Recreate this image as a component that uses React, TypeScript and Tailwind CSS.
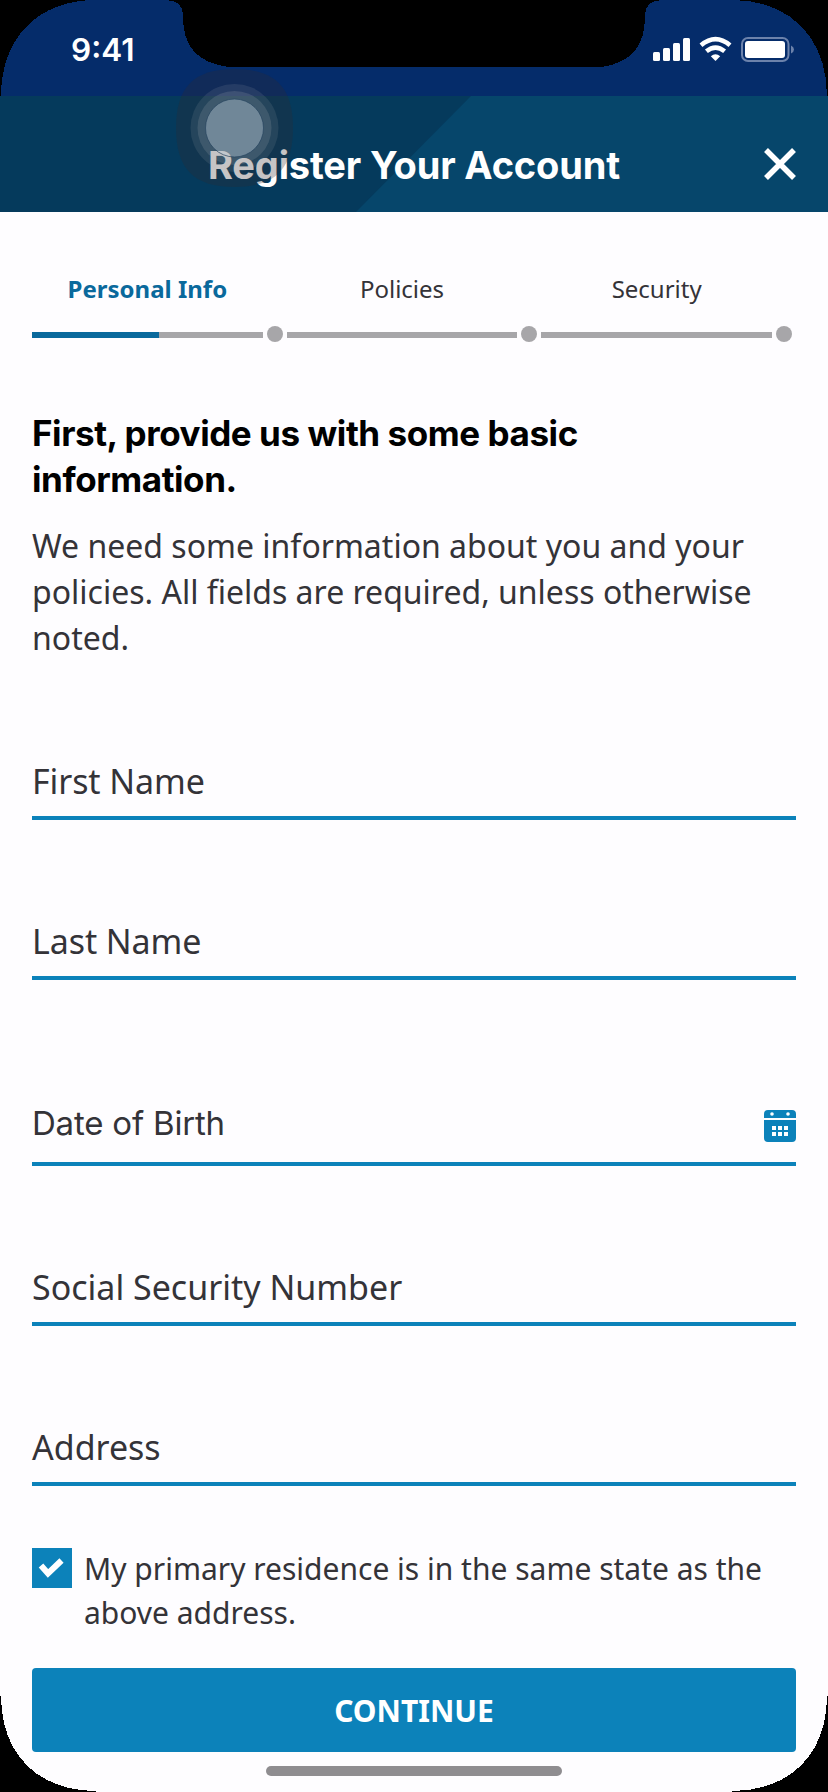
import React from "react";

const steps = [
  { label: "Personal Info", active: true },
  { label: "Policies", active: false },
  { label: "Security", active: false },
];

function StatusBar() {
  return (
    <div className="h-24 bg-[#052c6a] flex justify-between">
      <div className="pl-[71px] pt-[31px] font-['Inter',sans-serif] font-semibold text-[31.5px] leading-[38px] text-white">9:41</div>
      <svg className="w-[150px] h-[40px] mt-[30px] mr-[32px]" viewBox="646 30 150 40">
        <g fill="#fff">
          <rect x="653" y="52" width="7" height="9" rx="1.5" />
          <rect x="663" y="48" width="7" height="13" rx="1.5" />
          <rect x="673" y="43" width="7" height="18" rx="1.5" />
          <rect x="683" y="38" width="7" height="23" rx="1.5" />
          <path d="M715.500 61 L710.800 56.200 Q715.500 52.400 720.200 56.200 Z" />
        </g>
        <path d="M701 45.300 Q715.500 33 730 45.300" fill="none" stroke="#fff" strokeWidth="4.500" />
        <path d="M706.400 51.300 Q715.500 43.800 724.600 51.300" fill="none" stroke="#fff" strokeWidth="4.500" />
        <rect x="742" y="38" width="46.500" height="23" rx="6" fill="none" stroke="#6c82ab" strokeWidth="2" />
        <rect x="745" y="41" width="40" height="17" rx="3" fill="#fff" />
        <path d="M791 45.500 Q794 47 794 49.500 Q794 52 791 53.500Z" fill="#6c82ab" />
      </svg>
    </div>
  );
}

function Header() {
  return (
    <div className="h-[116px] relative">
      <svg className="absolute inset-0 w-full h-full" viewBox="0 0 828 116">
        <rect width="828" height="116" fill="#06466b" />
        <path d="M0 0H471L356 116H0Z" fill="#053a5c" />
      </svg>
      <div className="relative flex items-start justify-center pt-[46px]">
        <h1 className="font-['Inter',sans-serif] font-bold text-[38px] leading-[46px] tracking-[-0.15px] text-white whitespace-nowrap">Register Your Account</h1>
      </div>
      <svg className="absolute left-[764px] top-[52px] w-8 h-8" viewBox="0 0 32 32" aria-label="Close">
        <path d="M2 2L30 30M30 2L2 30" stroke="#fff" strokeWidth="5.500" fill="none" />
      </svg>
    </div>
  );
}

function Stepper() {
  return (
    <div className="flex pt-[57px]">
      {steps.map((s) => (
        <div key={s.label} className="flex-1">
          <div
            className={
              s.active
                ? "pr-6 text-center font-bold text-[24px] leading-10 text-[#0a699c] whitespace-nowrap"
                : "pr-6 text-center text-[24px] leading-10 text-[#343338] whitespace-nowrap"
            }
          >
            {s.label}
          </div>
          <div className="flex items-center mt-[17px] h-4">
            <div className="flex-1 h-[6px] mt-[2px] bg-[#a7a6a9]">
              {s.active && <div className="w-[127px] h-full bg-[#0a699c]" />}
            </div>
            <div className="w-4 h-4 mx-1 rounded-full bg-[#a7a6a9]" />
          </div>
        </div>
      ))}
    </div>
  );
}

function CalendarIcon() {
  return (
    <svg className="w-8 h-8" viewBox="0 0 32 32">
      <path d="M4 0H28Q32 0 32 4V8H0V4Q0 0 4 0Z M0 10H32V28Q32 32 28 32H4Q0 32 0 28Z" fill="#0c82ba" />
      <g fill="#fff">
        <circle cx="8" cy="4" r="1.800" />
        <circle cx="24" cy="4" r="1.800" />
        <rect x="8" y="16" width="4" height="4" />
        <rect x="14" y="16" width="4" height="4" />
        <rect x="20" y="16" width="4" height="4" />
        <rect x="8" y="22" width="4" height="4" />
        <rect x="14" y="22" width="4" height="4" />
        <rect x="20" y="22" width="4" height="4" />
      </g>
    </svg>
  );
}

function Frame() {
  return (
    <svg className="absolute inset-0 w-[828px] h-[1792px] pointer-events-none" viewBox="0 0 828 1792">
      <g shapeRendering="crispEdges">
        <path d="M0 0H96C38 0 1 38 1 96H0Z" />
        <path d="M828 0H732C790 0 827 38 827 96H828Z" />
        <path d="M0 1792V1696H1C1 1754 38 1791 96 1791V1792Z" />
        <path d="M828 1792V1696H827C827 1754 790 1791 732 1791V1792Z" />
        <path d="M166 0C178 1 183 5 183 16C183 46 196 62 228 67H602C632 62 645 46 645 16C645 5 650 1 662 0Z" />
      </g>
      <path d="M234.500 69C276 69 293 88 293 128S276 187 234.500 187S176 168 176 128S193 69 234.500 69Z" fill="#322a2e" fillOpacity=".28" />
      <circle cx="234.500" cy="128" r="44" fill="#c6c8cc" fillOpacity=".11" />
      <circle cx="234.500" cy="128" r="37" fill="#c6c8cc" fillOpacity=".15" />
      <circle cx="234.500" cy="128" r="29" fill="#bccbd8" fillOpacity=".41" stroke="#26455f" strokeOpacity=".7" strokeWidth="1" />
    </svg>
  );
}

export default function App() {
  return (
    <div className="relative w-[828px] h-[1792px] overflow-hidden bg-[#fefdff] font-['Noto_Sans',sans-serif] text-[#343338]">
      <StatusBar />
      <Header />
      <main className="px-8">
        <Stepper />
        <h2 className="mt-[68px] font-['Inter',sans-serif] font-bold text-[35px] leading-[46px] tracking-[-0.43px] text-black whitespace-nowrap">
          First, provide us with some basic
          <br />
          information.
        </h2>
        <p className="mt-[21px] text-[32px] leading-[46px] whitespace-nowrap">
          We need some information about you and your
          <br />
          policies. All fields are required, unless otherwise
          <br />
          noted.
        </p>
        <div className="mt-[99px] h-[60px] border-b-4 border-[#0c82ba] text-[34px] leading-[42px] tracking-[-0.1px]">First Name</div>
        <div className="mt-[100px] h-[60px] border-b-4 border-[#0c82ba] text-[34px] leading-[42px] tracking-[-0.1px]">Last Name</div>
        <div className="mt-[120px] h-[66px] border-b-4 border-[#0c82ba] flex justify-between">
          <span className="font-['Inter',sans-serif] text-[33px] leading-[46px] tracking-[-0.2px]">Date of Birth</span>
          <div className="pt-[10px]"><CalendarIcon /></div>
        </div>
        <div className="mt-[100px] h-[60px] border-b-4 border-[#0c82ba] text-[34px] leading-[42px]">Social Security Number</div>
        <div className="mt-[100px] h-[60px] border-b-4 border-[#0c82ba] text-[34px] leading-[42px]">Address</div>
        <div className="mt-[62px] h-[88px] flex gap-3">
          <div className="w-10 h-10 bg-[#0c82ba]">
            <svg className="w-10 h-10" viewBox="0 0 40 40">
              <path d="M9 17.500L16 25.500L29.500 12.500" fill="none" stroke="#fff" strokeWidth="6" />
            </svg>
          </div>
          <div className="-mt-px text-[30px] leading-[44px] whitespace-nowrap">
            My primary residence is in the same state as the
            <br />
            above address.
          </div>
        </div>
        <button className="mt-8 w-full h-[84px] rounded-[4px] bg-[#0c82ba] text-white font-bold text-[30px] leading-[86px] block">CONTINUE</button>
        <div className="mt-[14px] mx-auto w-[296px] h-[10px] rounded-full bg-[#8f8d90]" />
      </main>
      <Frame />
    </div>
  );
}
